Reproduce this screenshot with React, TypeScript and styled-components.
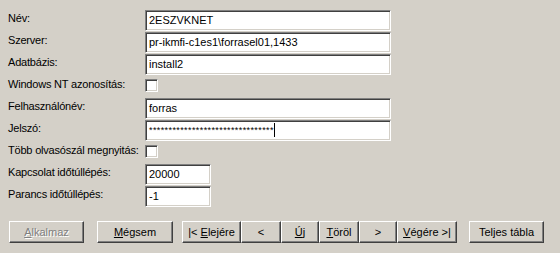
import styled, { createGlobalStyle } from "styled-components";

const GlobalStyle = createGlobalStyle`
  html, body {
    margin: 0;
    padding: 0;
    background: #d4d0c8;
  }
  body {
    font-family: "Liberation Sans", Arial, sans-serif;
    font-size: 11px;
    color: #000;
  }
`;

const Window = styled.div`
  width: 560px;
  height: 253px;
  background: #d4d0c8;
  box-sizing: border-box;
  padding: 10px 0 0 0;
  overflow: hidden;
`;

const Form = styled.div`
  display: grid;
  grid-template-columns: 137px auto;
  grid-auto-rows: 21px;
  row-gap: 1px;
  padding-left: 8px;
`;

const Label = styled.div`
  line-height: 13px;
  padding-top: 2px;
  letter-spacing: -0.2px;
  white-space: nowrap;
`;

const Field = styled.div<{ $w: number }>`
  width: ${(p) => p.$w}px;
  height: 21px;
  box-sizing: border-box;
  background: #fff;
  border-top: 1px solid #808080;
  border-left: 1px solid #808080;
  border-right: 1px solid #fff;
  border-bottom: 1px solid #fff;
  box-shadow: inset 1px 1px 0 #404040, inset -1px -1px 0 #d4d0c8;
  padding: 2px 0 0 3px;
  line-height: 14px;
  white-space: nowrap;
  overflow: hidden;
  display: flex;
  align-items: flex-start;
`;

const Stars = styled.span`
  font-size: 9px;
  letter-spacing: 0.4px;
  line-height: 12px;
  padding-top: 1px;
`;

const Caret = styled.span`
  display: inline-block;
  width: 1px;
  height: 14px;
  background: #000;
`;

const Check = styled.div`
  width: 13px;
  height: 13px;
  margin-top: 3px;
  box-sizing: border-box;
  background: #fff;
  border-top: 1px solid #808080;
  border-left: 1px solid #808080;
  border-right: 1px solid #fff;
  border-bottom: 1px solid #fff;
  box-shadow: inset 1px 1px 0 #404040, inset -1px -1px 0 #d4d0c8;
`;

const ButtonBar = styled.div`
  display: flex;
  align-items: flex-start;
  margin-top: 14px;
  padding-left: 9px;
`;

const NavGroup = styled.div`
  display: flex;
  margin-left: 9px;
  margin-right: 12px;
`;

const Button = styled.button<{ $w: number; $gap?: number }>`
  width: ${(p) => p.$w}px;
  height: 22px;
  margin: 0 0 0 ${(p) => p.$gap ?? 0}px;
  padding: 0;
  box-sizing: border-box;
  background: #d4d0c8;
  font-family: "Liberation Sans", Arial, sans-serif;
  font-size: 11px;
  color: #000;
  border-top: 1px solid #fff;
  border-left: 1px solid #fff;
  border-right: 1px solid #404040;
  border-bottom: 1px solid #404040;
  box-shadow: inset -1px -1px 0 #808080;
  display: flex;
  align-items: center;
  justify-content: center;
  white-space: nowrap;
  &:disabled {
    color: #808080;
    text-shadow: 1px 1px 0 #fff;
  }
`;

const Key = styled.span`
  text-decoration: underline;
`;

const stars = "*".repeat(32);

function App() {
  return (
    <Window>
      <GlobalStyle />
      <Form>
        <Label>Név:</Label>
        <Field $w={246}>2ESZVKNET</Field>
        <Label>Szerver:</Label>
        <Field $w={246}>pr-ikmfi-c1es1\forrasel01,1433</Field>
        <Label>Adatbázis:</Label>
        <Field $w={246}>install2</Field>
        <Label>Windows NT azonosítás:</Label>
        <Check />
        <Label>Felhasználónév:</Label>
        <Field $w={246}>forras</Field>
        <Label>Jelszó:</Label>
        <Field $w={246}>
          <Stars>{stars}</Stars>
          <Caret />
        </Field>
        <Label>Több olvasószál megnyitás:</Label>
        <Check />
        <Label>Kapcsolat időtúllépés:</Label>
        <Field $w={66}>20000</Field>
        <Label>Parancs időtúllépés:</Label>
        <Field $w={66}>-1</Field>
      </Form>
      <ButtonBar>
        <Button $w={75} disabled>
          <Key>A</Key>lkalmaz
        </Button>
        <Button $w={76} $gap={13}>
          <Key>M</Key>égsem
        </Button>
        <NavGroup>
          <Button $w={59}>
            |&lt;&nbsp;<Key>E</Key>lejére
          </Button>
          <Button $w={40}>&lt;</Button>
          <Button $w={38}>
            <Key>Ú</Key>j
          </Button>
          <Button $w={40}>
            <Key>T</Key>öröl
          </Button>
          <Button $w={38}>&gt;</Button>
          <Button $w={60}>
            <Key>V</Key>égére &gt;|
          </Button>
        </NavGroup>
        <Button $w={75}>Teljes tábla</Button>
      </ButtonBar>
    </Window>
  );
}

export default App;
